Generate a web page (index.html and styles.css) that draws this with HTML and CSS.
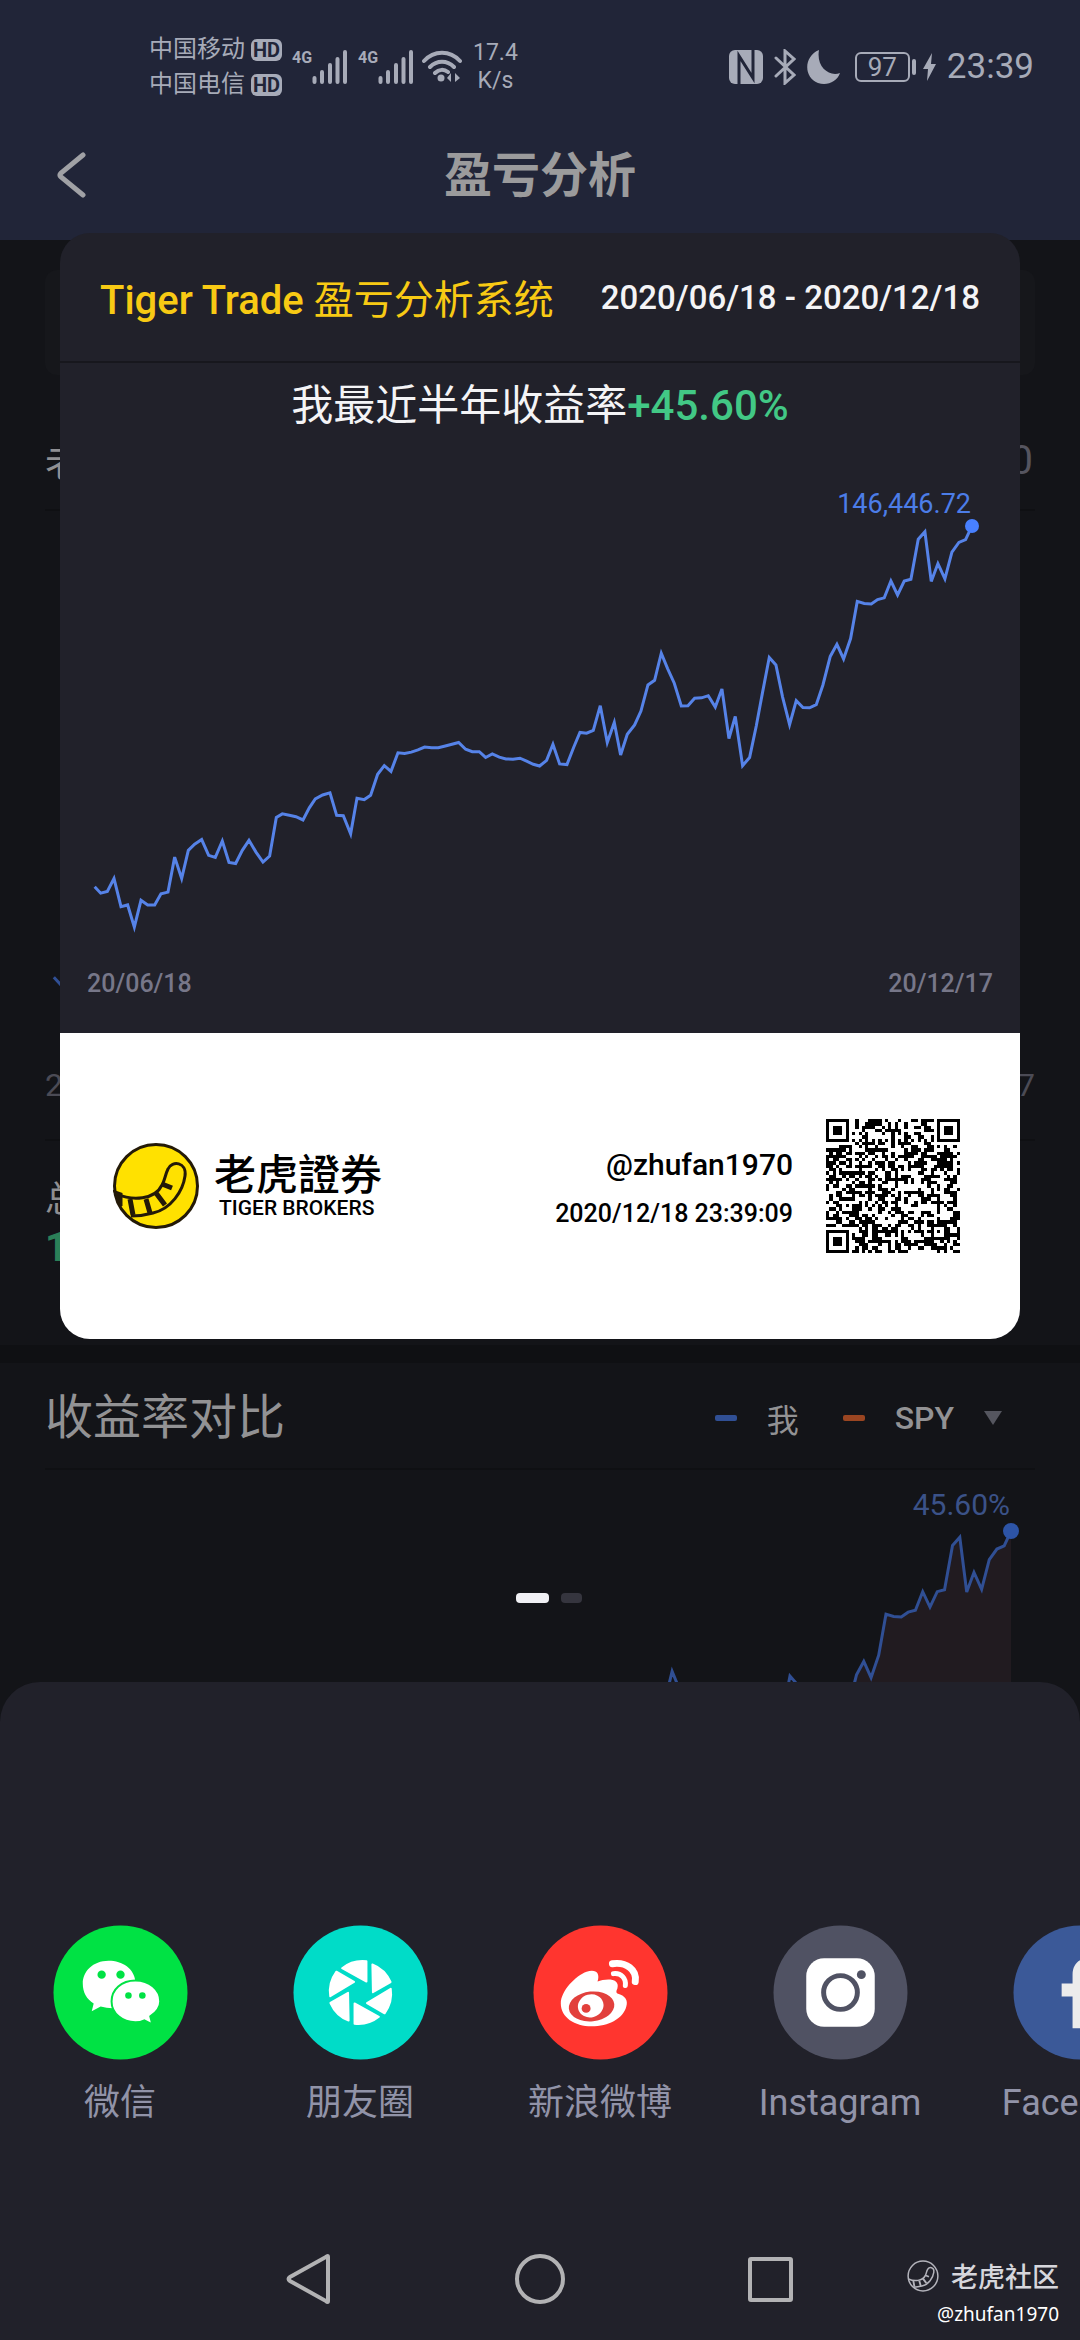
FILE: index.html
```html
<!DOCTYPE html>
<html lang="zh-CN">
<head>
  <meta charset="UTF-8">
  <meta name="viewport" content="width=device-width, initial-scale=1.0">
  <title>盈亏分析</title>
  <link rel="stylesheet" href="styles.css">
</head>
<body>
  <!-- shared shapes -->
  <svg class="defs" aria-hidden="true">
    <defs>
      <polyline id="curve" fill="none" stroke-linejoin="miter" vector-effect="non-scaling-stroke" points="104,1195 122,1213 142,1208 162,1172 183,1251 203,1246 223,1308 243,1233 263,1246 284,1246 303,1215 324,1210 344,1112 365,1172 385,1093 404,1076 425,1063 446,1107 466,1113 487,1067 507,1127 527,1130 547,1093 567,1065 588,1098 609,1126 629,1109 649,1001 667,991 688,995 708,999 729,1008 748,974 766,949 788,938 810,932 830,995 850,996 872,1047 891,947 913,951 932,939 953,880 973,856 993,872 1014,820 1034,822 1054,818 1074,812 1094,804 1115,806 1135,806 1156,801 1176,796 1196,791 1217,810 1237,817 1258,817 1277,833 1297,823 1318,832 1338,837 1359,838 1380,835 1400,843 1420,852 1439,857 1460,841 1479,796 1499,851 1521,853 1541,805 1560,763 1580,765 1600,757 1621,688 1642,791 1663,735 1682,826 1702,768 1724,742 1743,703 1764,630 1784,617 1804,541 1823,584 1843,625 1864,689 1884,688 1904,667 1925,666 1945,660 1966,692 1986,641 2007,780 2026,718 2048,856 2069,833 2089,745 2108,650 2128,553 2148,574 2168,664 2189,741 2209,674 2229,693 2249,694 2269,685 2289,630 2311,550 2331,516 2351,557 2372,500 2392,396 2413,402 2434,403 2453,391 2473,386 2493,339 2513,378 2533,339 2553,334 2575,222 2595,201 2614,340 2634,290 2655,333 2676,258 2697,231 2717,223 2736,185"/>
      <g id="tail">
        <path d="M4 51C19 58 42 57 49 42C52 37 52 32 55 26C59 17 74 19 72 33C70 48 58 66 40 70C33 72 25 73 18 73"/>
        <path d="M17 56L20 72M33 56L37 70M43 50L52 62M49 41L59 45" class="tail-stripe"/>
      </g>
    </defs>
  </svg>

  <div class="app">
    <header class="top">
      <div class="status-bar">
        <div class="carriers">
          <div class="carrier">中国移动<span class="hd">HD</span></div>
          <div class="carrier">中国电信<span class="hd">HD</span></div>
        </div>
        <div class="signal">
          <span class="net">4G</span>
          <svg width="36" height="34" viewBox="0 0 36 34"><path d="M2.500 28V32M10 22V32M18 15V32M25.500 9V32M33 2V32"/></svg>
        </div>
        <div class="signal">
          <span class="net">4G</span>
          <svg width="36" height="34" viewBox="0 0 36 34"><path d="M2.500 28V32M10 22V32M18 15V32M25.500 9V32M33 2V32"/></svg>
        </div>
        <svg class="wifi" width="40" height="34" viewBox="0 0 40 34">
          <path d="M2 11C12 0 28 0 38 11M8 17C15 10 25 10 32 17M13 23C17 19 22 19 26 22"/>
          <circle cx="19" cy="28" r="3.500" class="solid"/>
          <path d="M25 28l4-5v9zM33 23v9l5-4z" class="solid"/>
        </svg>
        <div class="speed"><span>17.4</span><span>K/s</span></div>

        <div class="status-right">
          <svg width="34" height="34" viewBox="0 0 34 34">
            <rect width="34" height="34" rx="6" class="solid"/>
            <path d="M10 34V6L24 28V0" class="nfc-cut"/>
          </svg>
          <svg width="22" height="36" viewBox="0 0 22 36"><path d="M2 9L20 26L11 34V2L20 10L2 27" class="thin"/></svg>
          <svg width="34" height="34" viewBox="0 0 34 34"><path d="M12 0C-3 6-4 27 11 33C20 36 30 32 33 23C22 27 9 17 12 0Z" class="solid"/></svg>
          <div class="battery">97</div>
          <svg class="bolt" width="13" height="28" viewBox="0 0 13 28"><path d="M9 0L0 16H5L4 28L13 11H8Z" class="solid"/></svg>
          <span class="clock">23:39</span>
        </div>
      </div>
      <div class="nav-bar">
        <button class="back" aria-label="返回">
          <svg width="32" height="48" viewBox="0 0 32 48"><path d="M27 3L5 21Q3 23 5 25L27 43"/></svg>
        </button>
        <h1>盈亏分析</h1>
      </div>
    </header>

    <main class="page">
      <section class="overview">
        <div class="filter"></div>
        <div class="account"><span>老</span><span class="account-value">0</span></div>
        <svg class="overview-chart" viewBox="0 0 1080 544" aria-hidden="true">
          <use href="#curve" class="dim-line" transform="translate(16 -5) scale(.3637 .3943)"/>
        </svg>
        <div class="overview-dates"><span>2</span><span>7</span></div>
        <div class="total">
          <div class="total-label">总</div>
          <div class="total-value">1</div>
        </div>
      </section>

      <section class="compare">
        <div class="compare-head">
          <h2>收益率对比</h2>
          <div class="legend">
            <i class="dash"></i><span>我</span>
            <i class="dash dash-spy"></i><button class="spy">SPY<i class="caret"></i></button>
          </div>
        </div>
        <svg class="compare-chart" viewBox="0 0 1080 520">
          <g transform="translate(16 -12) scale(.3637 .3943)">
            <polygon class="area" points="2269,685 2289,630 2311,550 2331,516 2351,557 2372,500 2392,396 2413,402 2434,403 2453,391 2473,386 2493,339 2513,378 2533,339 2553,334 2575,222 2595,201 2614,340 2634,290 2655,333 2676,258 2697,231 2717,223 2736,185 2736,1300 2269,1300"/>
            <use href="#curve" class="dim-line"/>
          </g>
          <circle cx="1011" cy="61" r="8" class="dim-dot"/>
          <text x="1010" y="45" text-anchor="end" class="dim-text">45.60%</text>
        </svg>
      </section>
    </main>

    <div class="share-layer">
      <article class="card">
        <div class="card-head">
          <div class="brand"><b>Tiger Trade</b> 盈亏分析系统</div>
          <div class="range">2020/06/18 - 2020/12/18</div>
        </div>
        <p class="rate">我最近半年收益率<strong>+45.60%</strong></p>
        <svg class="card-chart" viewBox="0 0 960 519">
          <use href="#curve" class="line" transform="translate(0 11) scale(.3333 .3571)"/>
          <circle cx="912" cy="77" r="7" class="dot"/>
          <text x="911" y="64" text-anchor="end" class="peak">146,446.72</text>
        </svg>
        <div class="card-dates"><span>20/06/18</span><span>20/12/17</span></div>
        <footer class="card-foot">
          <svg class="logo" width="86" height="86" viewBox="0 0 86 86">
            <circle cx="43" cy="43" r="41.500"/>
            <use href="#tail"/>
            <path d="M2 49L8 51V63Z" class="tail-tip"/>
          </svg>
          <div class="logo-text">
            <div class="logo-cn">老虎證券</div>
            <div class="logo-en">TIGER BROKERS</div>
          </div>
          <div class="user">
            <div class="user-name">@zhufan1970</div>
            <time>2020/12/18 23:39:09</time>
          </div>
          <svg class="qr" id="qr" width="134" height="134" viewBox="0 0 41 41" shape-rendering="crispEdges"></svg>
        </footer>
      </article>

      <div class="dots"><i class="on"></i><i></i></div>

      <div class="sheet">
        <div class="targets">
          <button class="target">
            <svg viewBox="-68 -68 136 136">
              <circle r="67.500" fill="#00e244"/>
              <path fill="#fff" d="M-12 -32C-28 -32-38 -21-38 -9C-38 0-34 7-27 11L-29 19L-20 14Q-10 17 0 15L15 -11C14 -24 2 -32-12 -32Z"/>
              <path fill="#fff" stroke="#00e244" stroke-width="2" d="M15 -12C1 -12-9 -3-9 9C-9 21 2 30 15 30Q20 30 24 28L32 32L30 24C36 20 40 15 40 9C40 -3 29 -12 15 -12Z"/>
              <g fill="#00e244"><circle cx="-19" cy="-18" r="4.200"/><circle cx="0" cy="-18" r="4.200"/><circle cx="8" cy="3" r="3.300"/><circle cx="22" cy="3" r="3.300"/></g>
            </svg>
            <span>微信</span>
          </button>
          <button class="target">
            <svg viewBox="-68 -68 136 136">
              <circle r="67.500" fill="#00dcc8"/>
              <g fill="#fff" stroke="#fff" stroke-width="2" stroke-linejoin="round">
                <path id="blade" d="M6 -31.500V-11L-18.500 -24.500Q-8 -33 6 -31.500Z"/>
                <use href="#blade" transform="rotate(60)"/>
                <use href="#blade" transform="rotate(120)"/>
                <use href="#blade" transform="rotate(180)"/>
                <use href="#blade" transform="rotate(240)"/>
                <use href="#blade" transform="rotate(300)"/>
              </g>
            </svg>
            <span>朋友圈</span>
          </button>
          <button class="target">
            <svg viewBox="-68 -68 136 136">
              <circle r="67.500" fill="#ff352f"/>
              <path fill="#fff" d="M-40 11C-40 -2-25 -17-14 -21C-5 -24 0 -20-3 -11C5 -14 20 -15 17 -4Q15 0 17 1C25 3 28 8 26 14C23 26 8 34-9 34C-26 34-40 25-40 11Z"/>
              <ellipse cx="-9" cy="14" rx="23" ry="15" fill="#e2403c" transform="rotate(-6 -9 14)"/>
              <ellipse cx="-10" cy="13.500" rx="13" ry="11.500" fill="#fff" transform="rotate(-15 -10 13)"/>
              <circle cx="-14.500" cy="16" r="4.500" fill="#e2403c"/>
              <g fill="none" stroke="#fff" stroke-linecap="round">
                <path stroke-width="7" d="M12 -29C26 -31 37 -23 35 -11"/>
                <path stroke-width="5" d="M13 -19C21 -20 26 -14 25 -7"/>
              </g>
            </svg>
            <span>新浪微博</span>
          </button>
          <button class="target">
            <svg viewBox="-68 -68 136 136">
              <circle r="67.500" fill="#505263"/>
              <rect x="-34.500" y="-34.500" width="69" height="69" rx="18" fill="#fff"/>
              <circle r="17" fill="none" stroke="#505263" stroke-width="5"/>
              <circle cx="21" cy="-18" r="4.500" fill="#505263"/>
            </svg>
            <span>Instagram</span>
          </button>
          <button class="target">
            <svg viewBox="-68 -68 136 136">
              <circle r="67.500" fill="#3b5998"/>
              <path fill="#ececec" d="M-8 36V4H-19V-9H-8V-18C-8 -29-1 -35 10 -35H19V-22H12Q7 -22 7 -17V-9H19L17 4H7V36Z"/>
            </svg>
            <span>Facebook</span>
          </button>
        </div>

        <nav class="system-nav">
          <button aria-label="返回"><svg width="60" height="60" viewBox="0 0 60 60"><path d="M48 8V52Q48 54 46 52L10 32Q7 30 10 28L46 8Q48 6 48 8Z"/></svg></button>
          <button aria-label="主页"><svg width="60" height="60" viewBox="0 0 60 60"><circle cx="30" cy="30" r="23"/></svg></button>
          <button aria-label="最近任务"><svg width="60" height="60" viewBox="0 0 60 60"><rect x="10" y="10" width="41" height="41" rx="1"/></svg></button>
        </nav>
      </div>

      <div class="watermark">
        <div class="watermark-name">
          <svg width="32" height="32" viewBox="0 0 86 86"><circle cx="43" cy="43" r="40"/><use href="#tail"/></svg>
          老虎社区
        </div>
        <div class="watermark-user">@zhufan1970</div>
      </div>
    </div>
  </div>

  <script src="qr.js"></script>
</body>
</html>
```

FILE: styles.css
```css
* {
  margin: 0;
  padding: 0;
  box-sizing: border-box;
}

:root {
  --panel: #21212a;
  --page: #131418;
  --bar: #212538;
  --blue: #4880ff;
  --blue-dim: #304f94;
  --status: #a7abb8;
  --label: #9193a8;
}

body {
  background: var(--page);
  font-family: Roboto, "Noto Sans CJK SC", sans-serif;
}

button {
  border: 0;
  background: none;
  color: inherit;
  font: inherit;
}

svg {
  display: block;
  flex: none;
}

.defs {
  position: absolute;
  width: 0;
  height: 0;
}

.app {
  position: relative;
  height: 100vh;
  overflow: hidden;
}

/* status + title */
.top {
  height: 240px;
  background: var(--bar);
}

.status-bar {
  display: flex;
  align-items: center;
  height: 134px;
  padding: 0 46px 0 149px;
  color: var(--status);
}

.status-bar path {
  fill: none;
  stroke: var(--status);
  stroke-width: 4px;
  stroke-linecap: round;
}

.status-bar .solid {
  fill: var(--status);
  stroke: none;
}

.status-bar .thin {
  stroke-width: 3px;
}

.status-bar .nfc-cut {
  stroke: var(--bar);
  stroke-width: 3px;
}

.carrier {
  display: flex;
  align-items: center;
  gap: 6px;
  font-size: 24px;
  line-height: 35px;
}

.hd {
  width: 31px;
  border-radius: 6px;
  background: var(--status);
  color: var(--bar);
  font-size: 20px;
  font-weight: 700;
  line-height: 22px;
  text-align: center;
}

.signal {
  display: flex;
  margin-left: 10px;
}

.net {
  width: 20px;
  font-size: 16px;
  font-weight: 700;
  line-height: 16px;
}

.wifi {
  margin-left: 8px;
}

.speed {
  display: flex;
  flex-direction: column;
  align-items: center;
  margin-left: 11px;
  font-size: 23px;
  line-height: 28px;
}

.status-right {
  display: flex;
  align-items: center;
  gap: 11px;
  margin-left: auto;
}

.battery {
  position: relative;
  width: 55px;
  margin-left: 3px;
  border: 2px solid var(--status);
  border-radius: 6px;
  font-size: 26px;
  line-height: 26px;
  text-align: center;
}

.battery::after {
  content: "";
  position: absolute;
  top: 5px;
  right: -8px;
  width: 4px;
  height: 16px;
  border-radius: 2px;
  background: var(--status);
}

.bolt {
  margin-left: 2px;
}

.clock {
  font-size: 35px;
  line-height: 40px;
}

.nav-bar {
  display: grid;
  grid-template-columns: 140px 1fr 140px;
  align-items: center;
  height: 84px;
  color: #9b9b9c;
}

.nav-bar h1 {
  font-size: 48px;
  font-weight: 700;
  line-height: 60px;
  text-align: center;
}

.back {
  padding-left: 56px;
}

.back path {
  fill: none;
  stroke: #a0a1a5;
  stroke-width: 5px;
  stroke-linecap: round;
}

/* page behind the share card */
.overview {
  padding-top: 30px;
  color: #8f8f92;
}

.filter {
  height: 105px;
  margin: 0 45px;
  border-radius: 12px;
  background: #16171b;
}

.account {
  display: flex;
  justify-content: space-between;
  align-items: center;
  height: 96px;
  margin: 40px 45px 0;
  padding: 0 2px 4px 0;
  border-bottom: 2px solid #0f1013;
  font-size: 40px;
}

.account-value {
  color: #55555f;
}

.overview-chart,
.compare-chart,
.card-chart {
  width: 100%;
}

.dim-line {
  stroke: var(--blue-dim);
  stroke-width: 3px;
}

.overview-dates {
  display: flex;
  justify-content: space-between;
  margin: 0 45px;
  padding-bottom: 24px;
  border-bottom: 2px solid #0f1013;
  color: #4b4b55;
  font-size: 32px;
  line-height: 60px;
}

.total {
  padding: 36px 45px 72px;
}

.total-label {
  font-size: 36px;
  line-height: 46px;
}

.total-value {
  color: #2b8058;
  font-size: 40px;
  font-weight: 700;
  line-height: 50px;
}

.compare {
  border-top: 18px solid #0f1013;
}

.compare-head {
  display: flex;
  justify-content: space-between;
  align-items: center;
  height: 107px;
  margin: 0 45px;
  padding: 4px 33px 0 0;
  border-bottom: 2px solid #0f1013;
  color: #929294;
}

.compare-head h2 {
  font-size: 48px;
  font-weight: 400;
  line-height: 60px;
}

.legend {
  display: flex;
  align-items: center;
  gap: 30px;
  font-size: 32px;
}

.dash {
  width: 22px;
  height: 6px;
  border-radius: 2px;
  background: var(--blue-dim);
}

.dash-spy {
  margin-left: 14px;
  background: #9a4521;
}

.spy {
  display: flex;
  align-items: center;
  gap: 30px;
  font-weight: 500;
}

.caret {
  border: 9px solid transparent;
  border-top: 14px solid #55565f;
  border-bottom: 0;
}

.area {
  fill: #211b20;
}

.dim-dot {
  fill: #2d54a6;
}

.dim-text {
  fill: #3b5288;
  font-size: 30px;
}

/* share overlay */
.share-layer {
  position: absolute;
  inset: 0;
  display: flex;
  flex-direction: column;
  padding-top: 233px;
}

.card {
  margin: 0 60px;
  border-radius: 30px;
  background: var(--panel);
  overflow: hidden;
}

.card-head {
  display: flex;
  justify-content: space-between;
  align-items: center;
  height: 130px;
  padding: 0 40px;
  border-bottom: 2px solid #17171d;
  white-space: nowrap;
}

.brand {
  color: #f8ca14;
  font-size: 40px;
}

.brand b {
  font-weight: 500;
}

.range {
  color: #f4f4f6;
  font-size: 33px;
  font-weight: 500;
}

.rate {
  color: #f4f4f6;
  font-size: 42px;
  line-height: 86px;
  text-align: center;
}

.rate strong {
  color: #42c885;
  font-weight: 500;
}

.line {
  stroke: #5683e8;
  stroke-width: 3px;
}

.dot {
  fill: var(--blue);
}

.peak {
  fill: #4c7de8;
  font-size: 27px;
}

.card-dates {
  display: flex;
  justify-content: space-between;
  padding: 0 27px 33px;
  color: #777789;
  font-size: 25px;
  font-weight: 500;
  line-height: 32px;
}

.card-foot {
  display: flex;
  align-items: center;
  height: 306px;
  padding: 0 60px 0 53px;
  background: #fff;
  color: #000;
}

.logo {
  fill: none;
  stroke: #241a08;
  stroke-width: 3px;
}

.logo circle {
  fill: #ffe100;
}

.tail-stripe {
  stroke-width: 5px;
}

.tail-tip {
  fill: #241a08;
}

.logo-text {
  margin-left: 15px;
}

.logo-cn {
  font-family: "Noto Sans CJK TC", sans-serif;
  font-size: 42px;
  font-weight: 500;
  line-height: 44px;
}

.logo-en {
  padding-left: 5px;
  font-size: 21px;
  font-weight: 500;
  line-height: 28px;
}

.user {
  margin: 0 33px 0 auto;
  padding-top: 6px;
  font-size: 25px;
  font-weight: 500;
  line-height: 49px;
  text-align: right;
}

.user-name {
  font-size: 30px;
}

.dots {
  display: flex;
  justify-content: center;
  gap: 12px;
  padding: 254px 0 79px 18px;
}

.dots i {
  width: 21px;
  height: 10px;
  border-radius: 4px;
  background: #35353e;
}

.dots .on {
  width: 33px;
  background: #f0f0f4;
}

.sheet {
  display: flex;
  flex: 1;
  flex-direction: column;
  padding-top: 243px;
  border-radius: 40px 40px 0 0;
  background: var(--panel);
}

.targets {
  display: flex;
  overflow: hidden;
}

.target {
  display: flex;
  flex: none;
  flex-direction: column;
  align-items: center;
  gap: 19px;
  width: 240px;
  color: var(--label);
  font-size: 36px;
  line-height: 48px;
}

.target svg {
  width: 135px;
  height: 135px;
}

.system-nav {
  display: flex;
  justify-content: center;
  gap: 170px;
  margin-top: auto;
  padding-bottom: 31px;
}

.system-nav svg {
  fill: none;
  stroke: #b2b2b4;
  stroke-width: 4px;
}

.watermark {
  position: absolute;
  right: 21px;
  bottom: 10px;
  color: #fff;
  font-family: "Noto Sans CJK SC", sans-serif;
  font-size: 20px;
  line-height: 32px;
  text-align: right;
}

.watermark-name {
  display: flex;
  align-items: center;
  gap: 12px;
  color: #d6d6dc;
  font-size: 27px;
  font-weight: 500;
  line-height: 44px;
}

.watermark-user {
  font-family: "Noto Sans", sans-serif;
  font-size: 19px;
}

.watermark svg {
  fill: none;
  stroke: #b4b4bc;
  stroke-width: 4px;
}
```

FILE: qr.js
```js
const SIZE = 41
const qr = document.querySelector('#qr')

// finder pattern: returns null outside of it
function finder (x, y, cx, cy) {
  const d = Math.max(Math.abs(x - cx), Math.abs(y - cy))
  if (d > 4) return null
  return d === 3 || d < 2
}

let seed = 1970
function noise () {
  seed = (seed * 1103515245 + 12345) % 2147483648
  return seed / 2147483648 < 0.52
}

function isDark (x, y) {
  const data = noise()
  for (const [cx, cy] of [[3, 3], [37, 3], [3, 37]]) {
    const dark = finder(x, y, cx, cy)
    if (dark !== null) return dark
  }
  const d = Math.max(Math.abs(x - 34), Math.abs(y - 34))
  if (d < 3) return d !== 1
  if (x === 6 || y === 6) return (x + y) % 2 === 0
  return data
}

let path = ''
for (let y = 0; y < SIZE; y++) {
  for (let x = 0; x < SIZE; x++) {
    if (isDark(x, y)) path += `M${x} ${y}h1v1h-1z`
  }
}
qr.innerHTML = `<path d="${path}"/>`
```
